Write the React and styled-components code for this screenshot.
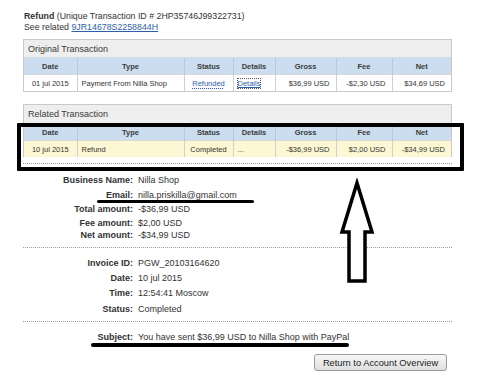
import React from "react";
import styled, { createGlobalStyle } from "styled-components";

const Global = createGlobalStyle`
  html, body { margin: 0; padding: 0; background: #fff; }
  body { font-family: "Liberation Sans", Arial, sans-serif; color: #333; }
`;

const Page = styled.div`
  position: relative;
  width: 500px;
  height: 381px;
  overflow: hidden;
  box-sizing: border-box;
  padding: 11px 48px 0 23px;
`;

const TitleBlock = styled.div`
  font-size: 8.8px;
  line-height: 11px;
  color: #333;
  padding-left: 1px;
`;

const Strong = styled.b`
  font-weight: bold;
`;

const Link = styled.a`
  color: #2d5fa8;
  text-decoration: underline;
`;

const Box = styled.div`
  margin-top: ${(p) => p.$mt}px;
  border: 1px solid #c9c9c9;
  border-bottom: ${(p) => (p.$open ? "none" : "1px solid #c9c9c9")};
`;

const BoxTitle = styled.div`
  height: ${(p) => p.$h}px;
  background: #eeeeee;
  font-size: 9px;
  color: #3a3a3a;
  display: flex;
  align-items: center;
  padding-left: 4px;
`;

const Grid = styled.table`
  width: 100%;
  border-collapse: collapse;
  table-layout: fixed;
  font-size: 7.5px;
`;

const Head = styled.th`
  height: 16px;
  padding: 0;
  background: #cbddef;
  color: #3b3b3b;
  font-weight: bold;
  text-align: center;
  border-left: 1px solid #b6c8da;
  border-top: 1px solid #d2dbe4;
  &:first-child { border-left: none; }
`;

const Cell = styled.td`
  height: ${(p) => p.$h}px;
  padding: 0 ${(p) => (p.$align === "right" ? "6px" : "0")} 0
    ${(p) => (p.$align === "left" ? "4px" : p.$pl ? `${p.$pl}px` : "0")};
  text-align: ${(p) => p.$align || "center"};
  background: ${(p) => p.$bg};
  border-left: 1px solid #d0d0d0;
  border-top: 1px solid #d8d8d8;
  color: #333;
  white-space: nowrap;
  &:first-child { border-left: none; }
`;

const StatusLink = styled.a`
  color: #2d5fa8;
  text-decoration: underline dotted;
  text-underline-offset: 2px;
`;

const DetailsLink = styled.a`
  color: #2d5fa8;
  text-decoration: underline;
  outline: 1px dotted #555;
  outline-offset: 0;
`;

const Separator = styled.div`
  margin-top: ${(p) => p.$mt || 0}px;
  border-top: 1px dotted #9d9d9d;
`;

const Section = styled.div`
  padding-top: ${(p) => p.$pt}px;
  padding-bottom: ${(p) => p.$pb}px;
`;

const Row = styled.div`
  display: grid;
  grid-template-columns: 110px 1fr;
  column-gap: 5px;
  height: ${(p) => p.$h}px;
  align-items: center;
  font-size: 9px;
  line-height: 10px;
`;

const Label = styled.span`
  font-weight: bold;
  text-align: right;
  color: #333;
  white-space: nowrap;
`;

const Value = styled.span`
  color: #333;
  white-space: nowrap;
`;

const ButtonRow = styled.div`
  display: flex;
  justify-content: flex-end;
  margin-top: 10px;
  padding-right: 5px;
`;

const Button = styled.button`
  width: 133px;
  height: 17px;
  padding: 0;
  border: 1px solid #9a9a9a;
  border-radius: 3px;
  background: linear-gradient(#f8f8f8, #dedede);
  font-family: "Liberation Sans", Arial, sans-serif;
  font-size: 9.3px;
  color: #222;
`;

const HighlightFrame = styled.div`
  position: absolute;
  left: 17px;
  top: 123px;
  width: 447px;
  height: 48px;
  box-sizing: border-box;
  border: 4px solid #000;
  border-radius: 1px;
  pointer-events: none;
`;

const Underline = styled.div`
  position: absolute;
  left: ${(p) => p.$x}px;
  top: ${(p) => p.$y}px;
  width: ${(p) => p.$w}px;
  height: ${(p) => p.$t}px;
  background: #000;
  border-radius: 2px;
`;

const ArrowSvg = styled.svg`
  position: absolute;
  left: 338px;
  top: 178px;
`;

const cols = [53, 107, 49, 42, 61, 56, 59];
const heads = ["Date", "Type", "Status", "Details", "Gross", "Fee", "Net"];

function TxTable({ row, bg, h }) {
  return (
    <Grid>
      <colgroup>
        {cols.map((w, i) => (
          <col key={i} style={{ width: w }} />
        ))}
      </colgroup>
      <thead>
        <tr>
          {heads.map((t) => (
            <Head key={t}>{t}</Head>
          ))}
        </tr>
      </thead>
      <tbody>
        <tr>
          <Cell $h={h} $bg={bg}>{row.date}</Cell>
          <Cell $h={h} $bg={bg} $align="left">{row.type}</Cell>
          <Cell $h={h} $bg={bg}>{row.status}</Cell>
          <Cell $h={h} $bg={bg} $align="left" $pl={row.detailsPad}>{row.details}</Cell>
          <Cell $h={h} $bg={bg} $align="right">{row.gross}</Cell>
          <Cell $h={h} $bg={bg} $align="right">{row.fee}</Cell>
          <Cell $h={h} $bg={bg} $align="right">{row.net}</Cell>
        </tr>
      </tbody>
    </Grid>
  );
}

export default function App() {
  return (
    <>
      <Global />
      <Page>
        <TitleBlock>
          <div>
            <Strong>Refund</Strong> (Unique Transaction ID # 2HP35746J99322731)
          </div>
          <div>
            See related <Link>9JR14678S2258844H</Link>
          </div>
        </TitleBlock>

        <Box $mt={6}>
          <BoxTitle $h={17}>Original Transaction</BoxTitle>
          <TxTable
            h={16}
            bg="#ffffff"
            row={{
              date: "01 jul 2015",
              type: "Payment From Nilla Shop",
              status: <StatusLink>Refunded</StatusLink>,
              details: <DetailsLink>Details</DetailsLink>,
              detailsPad: 5,
              gross: "$36,99 USD",
              fee: "-$2,30 USD",
              net: "$34,69 USD",
            }}
          />
        </Box>

        <Box $mt={12} $open>
          <BoxTitle $h={18}>Related Transaction</BoxTitle>
          <TxTable
            h={16}
            bg="#fdf8d3"
            row={{
              date: "10 jul 2015",
              type: "Refund",
              status: "Completed",
              details: "...",
              detailsPad: 12,
              gross: "-$36,99 USD",
              fee: "$2,00 USD",
              net: "-$34,99 USD",
            }}
          />
        </Box>

        <Separator $mt={6} />
        <Section $pt={9} $pb={7}>
          <Row $h={14}><Label>Business Name:</Label><Value>Nilla Shop</Value></Row>
          <Row $h={15}><Label>Email:</Label><Value>nilla.priskilla@gmail.com</Value></Row>
          <Row $h={14}><Label>Total amount:</Label><Value>-$36,99 USD</Value></Row>
          <Row $h={14}><Label>Fee amount:</Label><Value>$2,00 USD</Value></Row>
          <Row $h={10}><Label>Net amount:</Label><Value>-$34,99 USD</Value></Row>
        </Section>
        <Separator />
        <Section $pt={8} $pb={3}>
          <Row $h={14}><Label>Invoice ID:</Label><Value>PGW_20103164620</Value></Row>
          <Row $h={15}><Label>Date:</Label><Value>10 jul 2015</Value></Row>
          <Row $h={15}><Label>Time:</Label><Value>12:54:41 Moscow</Value></Row>
          <Row $h={18}><Label>Status:</Label><Value>Completed</Value></Row>
        </Section>
        <Separator />
        <Section $pt={8} $pb={0}>
          <Row $h={14}>
            <Label>Subject:</Label>
            <Value>You have sent $36,99 USD to Nilla Shop with PayPal</Value>
          </Row>
        </Section>
        <ButtonRow>
          <Button>Return to Account Overview</Button>
        </ButtonRow>

        <HighlightFrame />
        <Underline $x={97} $y={200} $w={157} $t={3} />
        <Underline $x={91} $y={343} $w={258} $t={3.5} />
        <ArrowSvg width="38" height="108" viewBox="0 0 38 108">
          <polygon
            points="19,5 34,54 27,54 27,103 11,103 11,54 4,54"
            fill="#fff"
            stroke="#000"
            strokeWidth="3.5"
            strokeLinejoin="miter"
          />
        </ArrowSvg>
      </Page>
    </>
  );
}
